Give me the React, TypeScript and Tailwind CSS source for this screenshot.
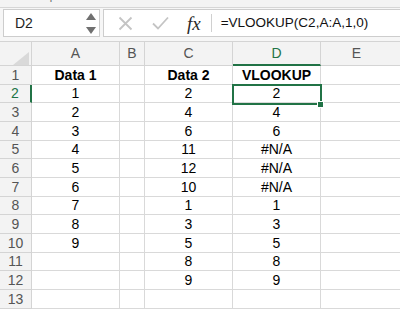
import React from "react";

const data: string[][] = [
  ["Data 1", "", "Data 2", "VLOOKUP"],
  ["1", "", "2", "2"],
  ["2", "", "4", "4"],
  ["3", "", "6", "6"],
  ["4", "", "11", "#N/A"],
  ["5", "", "12", "#N/A"],
  ["6", "", "10", "#N/A"],
  ["7", "", "1", "1"],
  ["8", "", "3", "3"],
  ["9", "", "5", "5"],
  ["", "", "8", "8"],
  ["", "", "9", "9"],
  ["", "", "", ""],
];

const heights = [19, 18, 19, 19, 18, 19, 19, 18, 19, 19, 18, 19, 19];

const font = { fontFamily: '"Liberation Sans", Arial, sans-serif' };

export default function App() {
  return (
    <div className="w-[400px] h-[315px] overflow-hidden bg-white" style={font}>
      {/* ribbon bottom strip */}
      <div className="relative h-[8px] bg-[#f3f3f3] border-b border-[#d6d6d6] overflow-hidden">
        <span className="absolute left-[37px] top-[-10px] text-[11px] leading-[13px] text-[#6b6b6b]">Clipboard</span>
        <span className="absolute left-[268px] top-[-10px] text-[11px] leading-[13px] text-[#6b6b6b]">Font</span>
      </div>
      {/* formula bar */}
      <div className="h-[34px] bg-[#f6f6f6] border-b border-[#d4d4d4] flex items-start pt-[1px]">
        <div className="ml-[3px] w-[97px] h-[28px] bg-white border border-[#cdcdcd] flex items-center">
          <span className="ml-[11px] text-[14px] text-[#1f1f1f]">D2</span>
          <div className="ml-auto mr-[3px] flex flex-col items-center gap-[7px]">
            <svg width="10" height="7" viewBox="0 0 10 7"><path d="M5 0 L10 7 L0 7 Z" fill="#707070" /></svg>
            <svg width="10" height="7" viewBox="0 0 10 7"><path d="M0 0 L10 0 L5 7 Z" fill="#707070" /></svg>
          </div>
        </div>
        <div className="ml-[3px] flex-1 h-[28px] bg-white border border-[#cdcdcd] border-r-0 flex items-center">
          <svg className="ml-[14px]" width="15" height="15" viewBox="0 0 15 15">
            <path d="M1.5 1.5 L13.5 13.5 M13.5 1.5 L1.5 13.5" stroke="#c4c4c4" strokeWidth="1.8" fill="none" />
          </svg>
          <svg className="ml-[19px]" width="17" height="14" viewBox="0 0 17 14">
            <path d="M1 7.5 L6 12.5 L16 1.5" stroke="#c4c4c4" strokeWidth="1.8" fill="none" />
          </svg>
          <span
            className="ml-[18px] text-[19px] italic text-[#2a2a2a] leading-none"
            style={{ fontFamily: '"Liberation Serif", "Times New Roman", serif' }}
          >
            fx
          </span>
          <div className="ml-[10px] w-px h-[18px] bg-[#d0d0d0]" />
          <span className="ml-[9px] text-[13.5px] text-[#111]">=VLOOKUP(C2,A:A,1,0)</span>
        </div>
      </div>
      {/* grid */}
      <div className="relative">
        {/* header row */}
        <div className="flex h-[24px] bg-[#f3f3f3] text-[14px] text-[#555]">
          <div className="relative w-[32px] border-r border-b border-[#d4d4d4]">
            <svg className="absolute left-[13px] top-[10px]" width="16" height="13" viewBox="0 0 16 13">
              <path d="M16 0 L16 13 L0 13 Z" fill="#d9d9d9" />
            </svg>
          </div>
          <div className="w-[88px] border-r border-b border-[#d4d4d4] flex items-center justify-center">A</div>
          <div className="w-[25px] border-r border-b border-[#d4d4d4] flex items-center justify-center">B</div>
          <div className="w-[88px] border-r border-b border-[#d4d4d4] flex items-center justify-center">C</div>
          <div className="w-[88px] border-r border-[#d4d4d4] border-b-2 border-b-[#217346] flex items-center justify-center text-[#217346]">D</div>
          <div className="flex-1 border-b border-[#d4d4d4] flex items-center justify-center pr-[8px]">E</div>
        </div>
        {data.map((r, i) => (
          <div key={i} className="flex text-[14px]" style={{ height: heights[i] }}>
            <div
              className={
                i === 1
                  ? "w-[32px] bg-[#f3f3f3] border-r-2 border-r-[#217346] border-b border-b-[#d4d4d4] flex items-center justify-center text-[#217346]"
                  : "w-[32px] bg-[#f3f3f3] border-r border-b border-[#d4d4d4] flex items-center justify-center text-[#555]"
              }
            >
              {i + 1}
            </div>
            <div className={"w-[88px] border-r border-b border-[#d9d9d9] flex items-center justify-center text-black " + (i === 0 ? "font-bold" : "")}>{r[0]}</div>
            <div className="w-[25px] border-r border-b border-[#d9d9d9]" />
            <div className={"w-[88px] border-r border-b border-[#d9d9d9] flex items-center justify-center text-black " + (i === 0 ? "font-bold" : "")}>{r[2]}</div>
            <div className={"w-[88px] border-r border-b border-[#d9d9d9] flex items-center justify-center text-black " + (i === 0 ? "font-bold" : "")}>{r[3]}</div>
            <div className="flex-1 border-b border-[#d9d9d9]" />
          </div>
        ))}
        {/* selection */}
        <div className="absolute left-[232px] top-[42px] w-[90px] h-[21px] border-2 border-[#217346]" />
        <div className="absolute left-[317px] top-[59px] w-[7px] h-[7px] bg-[#217346] border border-white" />
      </div>
    </div>
  );
}
